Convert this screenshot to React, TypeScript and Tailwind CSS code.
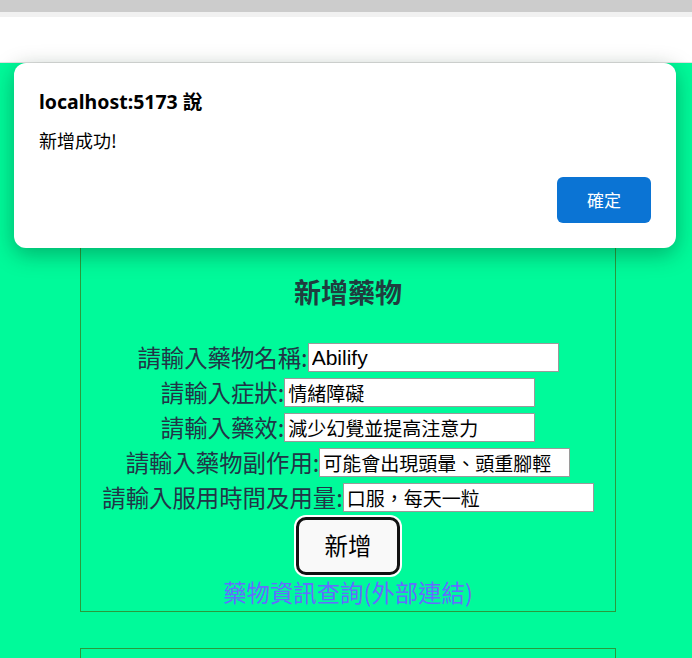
import React from 'react';

const cjk = "font-['Noto_Sans_CJK_TC','Noto_Sans',sans-serif]";

function Row({ label, value, font }: { label: string; value: string; font?: string }) {
  return (
    <div className="h-[35px] flex items-center justify-center">
      <span className="text-[23.4px] leading-none text-[#213547]">{label}:</span>
      <input
        readOnly
        value={value}
        className={`w-[251px] h-[29px] bg-white border border-[#9a9a9a] px-[3px] text-[19px] text-black outline-none ${font ?? ''}`}
      />
    </div>
  );
}

export default function App() {
  return (
    <div className={`relative min-h-screen bg-[#00fa9a] overflow-hidden ${cjk}`}>
      {/* browser chrome */}
      <div className="h-[12px] bg-[#cccccc]" />
      <div className="h-[5px] bg-[#f1f1f1]" />
      <div className="h-[46px] bg-white border-b border-[#e2e2e2]" />

      {/* page */}
      <div className="pt-[169px]">
        <div className="ml-[80px] w-[536px] border border-[#2a9a3c] pt-[43px]">
          <h2 className="h-[32px] flex items-center justify-center text-[27px] font-bold text-[#1f3d3f]">新增藥物</h2>
          <div className="mt-[32px] flex flex-col">
            <Row label="請輸入藥物名稱" value="Abilify" font="font-['Liberation_Sans',sans-serif] text-[21px]" />
            <Row label="請輸入症狀" value="情緒障礙" />
            <Row label="請輸入藥效" value="減少幻覺並提高注意力" />
            <Row label="請輸入藥物副作用" value="可能會出現頭暈、頭重腳輕" />
            <Row label="請輸入服用時間及用量" value="口服，每天一粒" />
          </div>
          <div className="flex justify-center pt-[2px]">
            <button className="w-[104px] h-[58px] rounded-[10px] bg-[#f9f9f9] border-[3px] border-[#111] shadow-[0_0_0_2px_#ffffff] text-[23.4px] text-black">
              新增
            </button>
          </div>
          <div className="h-[36px] flex items-center justify-center">
            <a className="text-[23.4px] text-[#646cff] leading-none">藥物資訊查詢(外部連結)</a>
          </div>
        </div>
        <div className="ml-[80px] mt-[36px] w-[536px] h-[80px] border border-[#2a9a3c]" />
      </div>

      {/* alert dialog */}
      <div className="absolute left-[14px] top-[63px] w-[662px] h-[185px] bg-white rounded-[12px] shadow-[0_6px_22px_rgba(0,40,20,0.35)] px-[25px]">
        <div className="pt-[25px] text-[19.5px] font-bold text-black font-['Noto_Sans','Noto_Sans_CJK_TC',sans-serif] leading-[28px]">
          localhost:5173 說
        </div>
        <div className="mt-[12px] text-[18px] text-black leading-[24px]">新增成功!</div>
        <div className="flex justify-end mt-[25px]">
          <button className="w-[94px] h-[46px] rounded-[6px] bg-[#0b74d4] text-white text-[17px]">確定</button>
        </div>
      </div>
    </div>
  );
}
